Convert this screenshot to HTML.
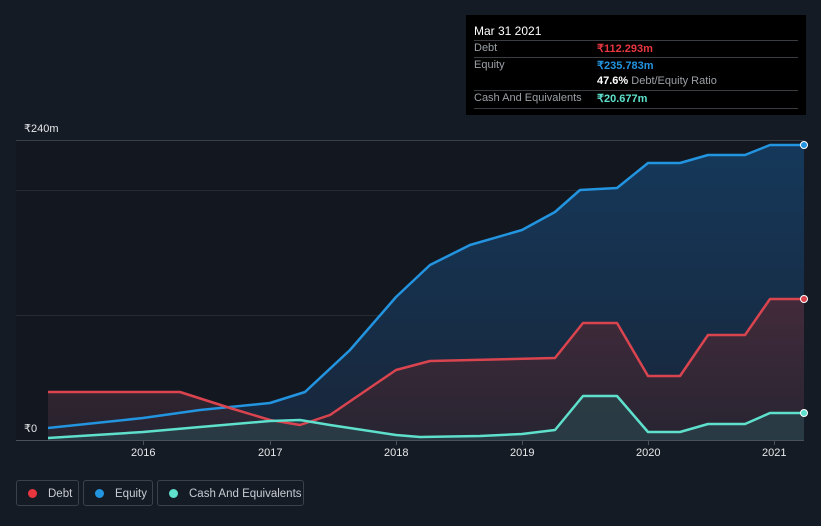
<!DOCTYPE html>
<html><head><meta charset="utf-8"><style>
body{margin:0;width:821px;height:526px;background:#151b24;font-family:"Liberation Sans",sans-serif;overflow:hidden;position:relative}
.tip{position:absolute;left:466px;top:15px;width:340px;height:100px;background:#000;font-size:11px;color:#9aa0a6}
.tip .r{position:absolute;left:8px;right:8px;border-top:1px solid #3a3d42}
.tip div{white-space:nowrap}
.leg{position:absolute;top:480px;height:26px;border:1px solid #3b414b;border-radius:3px;color:#c8ccd2;font-size:11.5px;line-height:26px;box-sizing:border-box;white-space:nowrap;overflow:hidden}
.leg i{display:inline-block;width:9px;height:9px;border-radius:50%;margin:0 11px 0 11px;vertical-align:-1px}
.ax{position:absolute;color:#e6e8eb;font-size:11px}
</style></head><body>
<svg width="821" height="526" style="position:absolute;left:0;top:0">
<defs>
<linearGradient id="ge" x1="0" y1="0" x2="0" y2="1"><stop offset="0" stop-color="#15385a"/><stop offset="1" stop-color="#18263a"/></linearGradient>
<linearGradient id="gd" x1="0" y1="0" x2="0" y2="1"><stop offset="0" stop-color="#4a2a38"/><stop offset="1" stop-color="#2a2430"/></linearGradient>
</defs>
<rect x="16" y="140" width="788" height="300" fill="#131820"/>
<line x1="16" y1="140.5" x2="804" y2="140.5" stroke="#3a3f47"/>
<line x1="16" y1="190.5" x2="804" y2="190.5" stroke="#262b33"/>
<line x1="16" y1="315.5" x2="804" y2="315.5" stroke="#262b33"/>
<polygon fill="url(#ge)" points="48,428 143,418 200,410 270,403 305,392 350,350 396,297 430,265 470,245 522,230 555,212 580,190 617,188 648,163 680,163 708,155 745,155 770,145 804,145 804,440 48,440"/>
<polygon fill="url(#gd)" opacity="0.85" points="48,392 180,392 230,408 270,420 300,425 330,415 396,370 430,361 555,358 583,323 617,323 648,376 680,376 708,335 745,335 770,299 804,299 804,440 48,440"/>
<polygon fill="#2a4a50" opacity="0.6" points="48,438 143,432 200,427 270,421 300,420 330,425 396,435 420,437 480,436 522,434 555,430 583,396 617,396 648,432 680,432 708,424 745,424 770,413 804,413 804,440 48,440"/>
<polyline fill="none" stroke="#2394e0" stroke-width="2.5" stroke-linejoin="round" points="48,428 143,418 200,410 270,403 305,392 350,350 396,297 430,265 470,245 522,230 555,212 580,190 617,188 648,163 680,163 708,155 745,155 770,145 804,145"/>
<polyline fill="none" stroke="#d9444f" stroke-width="2.5" stroke-linejoin="round" points="48,392 180,392 230,408 270,420 300,425 330,415 396,370 430,361 555,358 583,323 617,323 648,376 680,376 708,335 745,335 770,299 804,299"/>
<polyline fill="none" stroke="#5ee0cc" stroke-width="2.5" stroke-linejoin="round" points="48,438 143,432 200,427 270,421 300,420 330,425 396,435 420,437 480,436 522,434 555,430 583,396 617,396 648,432 680,432 708,424 745,424 770,413 804,413"/>
<circle cx="804" cy="145" r="3.5" fill="#2394e0" stroke="#fff" stroke-width="1"/>
<circle cx="804" cy="299" r="3.5" fill="#d9444f" stroke="#fff" stroke-width="1"/>
<circle cx="804" cy="413" r="3.5" fill="#5ee0cc" stroke="#fff" stroke-width="1"/>
<line x1="16" y1="440.5" x2="804" y2="440.5" stroke="#4a5058"/>
<g stroke="#4a5058"><line x1="143.5" y1="440" x2="143.5" y2="445"/><line x1="270.5" y1="440" x2="270.5" y2="445"/><line x1="396.5" y1="440" x2="396.5" y2="445"/><line x1="522.5" y1="440" x2="522.5" y2="445"/><line x1="648.5" y1="440" x2="648.5" y2="445"/><line x1="774.5" y1="440" x2="774.5" y2="445"/></g>
</svg>
<div class="ax" style="left:24px;top:122px">₹240m</div>
<div class="ax" style="left:24px;top:422px">₹0</div>
<div class="ax" style="left:131px;top:447px">2016</div>
<div class="ax" style="left:258px;top:447px">2017</div>
<div class="ax" style="left:384px;top:447px">2018</div>
<div class="ax" style="left:510px;top:447px">2019</div>
<div class="ax" style="left:636px;top:447px">2020</div>
<div class="ax" style="left:762px;top:447px">2021</div>
<div class="tip">
<div style="position:absolute;left:8px;top:9px;color:#fff;font-size:12px">Mar 31 2021</div>
<div class="r" style="top:25px"></div>
<div style="position:absolute;left:8px;top:27px">Debt</div><div style="position:absolute;left:131px;top:27px;color:#e8363f;font-weight:bold">₹112.293m</div>
<div class="r" style="top:42px"></div>
<div style="position:absolute;left:8px;top:44px">Equity</div><div style="position:absolute;left:131px;top:44px;color:#2394e0;font-weight:bold">₹235.783m</div>
<div style="position:absolute;left:131px;top:60px"><b style="color:#fff">47.6%</b> Debt/Equity Ratio</div>
<div class="r" style="top:75px"></div>
<div style="position:absolute;left:8px;top:77px">Cash And Equivalents</div><div style="position:absolute;left:131px;top:77px;color:#5ee0cc;font-weight:bold">₹20.677m</div>
<div class="r" style="top:93px"></div>
</div>
<div class="leg" style="left:16px;width:63px"><i style="background:#e8363f"></i>Debt</div>
<div class="leg" style="left:83px;width:70px"><i style="background:#2394e0"></i>Equity</div>
<div class="leg" style="left:157px;width:147px"><i style="background:#5ee0cc"></i>Cash And Equivalents</div>
</body></html>
